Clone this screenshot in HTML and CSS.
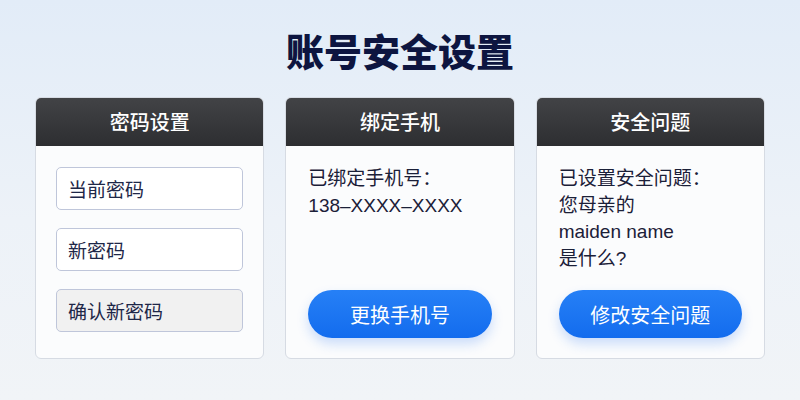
FILE: index.html
```html
<!DOCTYPE html>
<html lang="zh-CN">
<head>
  <meta charset="UTF-8">
  <meta name="viewport" content="width=device-width, initial-scale=1.0">
  <title>账号安全设置</title>
  <link rel="stylesheet" href="styles.css">
</head>
<body>
  <h1 class="page-title">账号安全设置</h1>

  <div class="cards">
    <section class="card">
      <h2 class="card-head">密码设置</h2>
      <div class="card-body">
        <input class="field" type="password" placeholder="当前密码">
        <input class="field" type="password" placeholder="新密码">
        <input class="field field-muted" type="password" placeholder="确认新密码">
      </div>
    </section>

    <section class="card">
      <h2 class="card-head">绑定手机</h2>
      <div class="card-body">
        <p class="info">已绑定手机号：<br>138–XXXX–XXXX</p>
        <button type="button" class="btn">更换手机号</button>
      </div>
    </section>

    <section class="card">
      <h2 class="card-head">安全问题</h2>
      <div class="card-body">
        <p class="info">已设置安全问题：<br>您母亲的<br>maiden name<br>是什么?</p>
        <button type="button" class="btn">修改安全问题</button>
      </div>
    </section>
  </div>
</body>
</html>
```

FILE: styles.css
```css
* { box-sizing: border-box; }
body {
  margin: 0;
  height: 400px;
  overflow: hidden;
  font-family: "Liberation Sans", "Noto Sans CJK SC", sans-serif;
  background: linear-gradient(180deg, #e2ecf8 0%, #edf2f8 55%, #f1f4f7 100%);
  color: #1b2240;
}
.page-title {
  margin: 0;
  padding-top: 26px;
  height: 97px;
  text-align: center;
  font-family: "Noto Sans CJK SC", sans-serif;
  font-size: 38px;
  line-height: 48px;
  font-weight: 900;
  color: #0d1540;
}
.cards {
  display: flex;
  gap: 21px;
  padding: 0 35px;
}
.card {
  flex: 1;
  height: 262px;
  display: flex;
  flex-direction: column;
  background: #fbfcfd;
  border: 1px solid #d6dbe3;
  border-radius: 6px;
  overflow: hidden;
}
.card-head {
  margin: 0;
  height: 48px;
  line-height: 48px;
  text-align: center;
  font-family: "Noto Sans CJK SC", sans-serif;
  font-size: 20px;
  font-weight: 500;
  color: #fff;
  background: linear-gradient(180deg, #424346 0%, #2d2e31 100%);
}
.card-body {
  flex: 1;
  display: flex;
  flex-direction: column;
  padding: 20px 22px 20px;
}
.card-body .field:first-child { margin-top: 1px; }
.field {
  height: 43px;
  margin: 0 -2px 18px;
  padding: 0 11px;
  border: 1px solid #bfc6da;
  border-radius: 5px;
  background: #fff;
  font-family: "Noto Sans CJK SC", sans-serif;
  font-size: 19px;
}
.field::placeholder { color: #1e2748; }
.field-muted { background: #f1f1f1; }
.info {
  margin: 0;
  font-size: 19px;
  line-height: 26.5px;
  color: #1b2038;
}
.btn {
  margin-top: auto;
  height: 48px;
  border: none;
  border-radius: 24px;
  background: linear-gradient(180deg, #2680f6 0%, #136cee 100%);
  box-shadow: 0 6px 12px rgba(30, 110, 240, 0.22);
  color: #fff;
  font-family: "Noto Sans CJK SC", sans-serif;
  font-size: 20px;
  cursor: pointer;
}
```
